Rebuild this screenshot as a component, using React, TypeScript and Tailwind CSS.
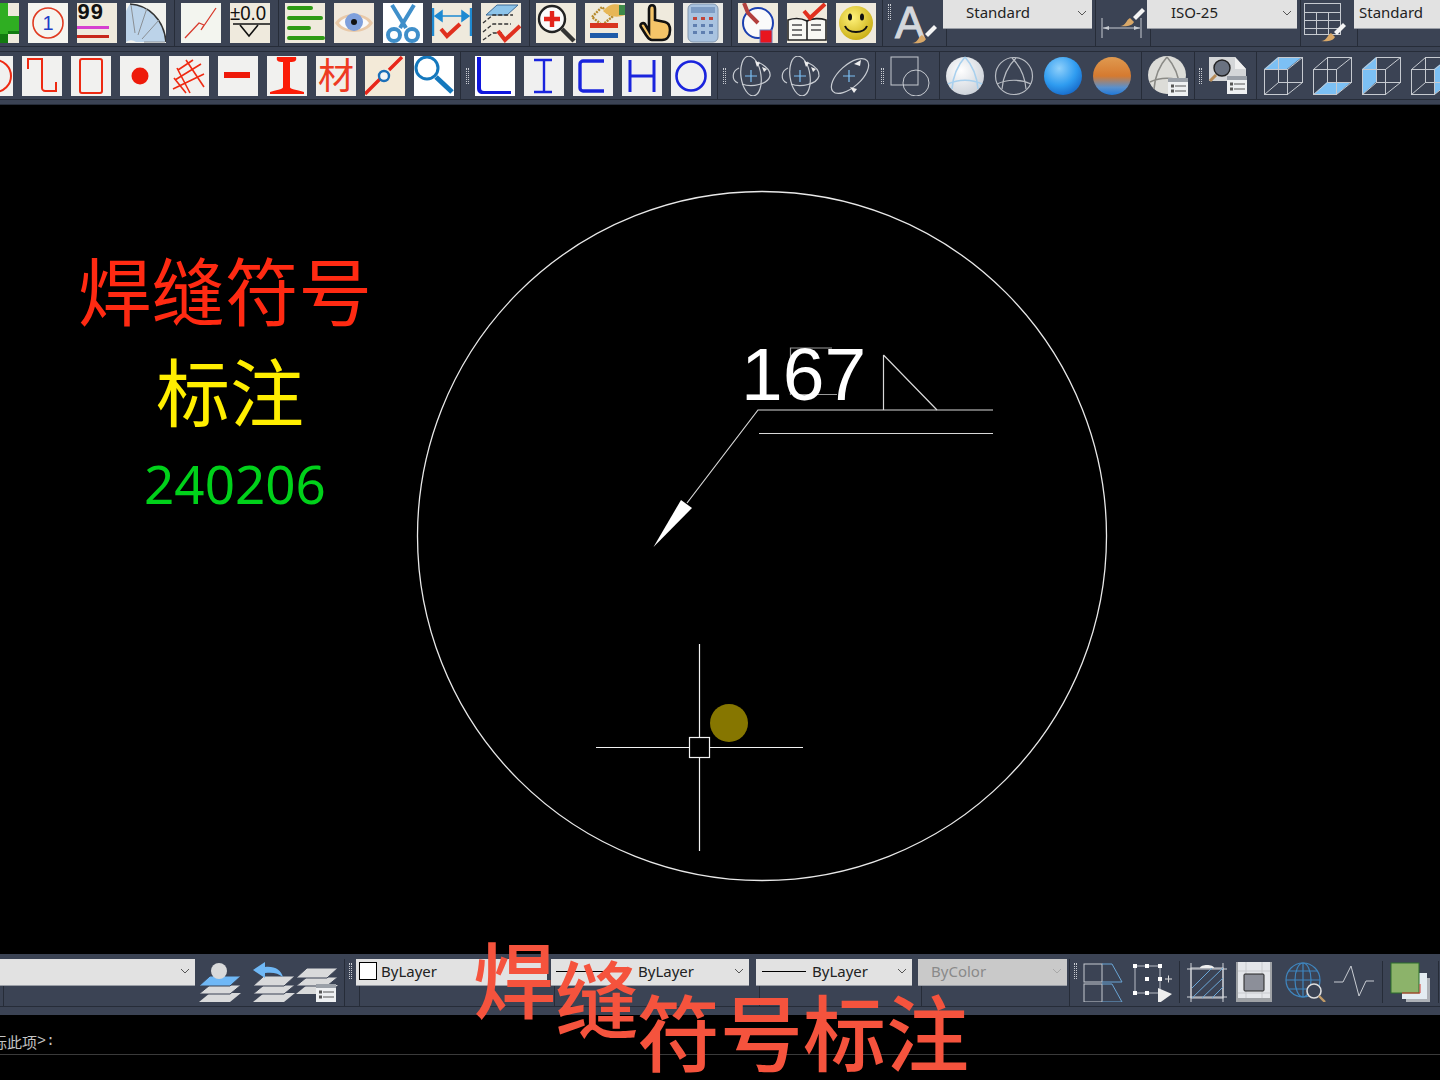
import type { ReactNode } from "react";

const cn = "font-['Noto_Sans_CJK_SC','Noto_Sans',sans-serif]";

function Tile({ bg = "bg-[#efeadd]", children, className = "" }: { bg?: string; children?: ReactNode; className?: string }) {
  return (
    <div className={`w-10 h-10 shrink-0 ${bg} ${className}`}>
      <svg width="40" height="40" viewBox="0 0 40 40">
        {children}
      </svg>
    </div>
  );
}

function Icon({ w = 40, children, className = "" }: { w?: number; children?: ReactNode; className?: string }) {
  return (
    <div className={`h-10 shrink-0 ${className}`}>
      <svg width={w} height="40" viewBox={`0 0 ${w} 40`}>
        {children}
      </svg>
    </div>
  );
}

function Sep({ className = "" }: { className?: string }) {
  return <div className={`w-px self-stretch bg-[#262c38] shrink-0 ${className}`} />;
}

function Grip({ className = "" }: { className?: string }) {
  return (
    <div className={`w-[3px] h-4 shrink-0 border-x border-dotted border-[#c9ccd2] ${className}`} />
  );
}

function Chevron({ light = false }: { light?: boolean }) {
  return (
    <svg width="10" height="6" viewBox="0 0 10 6" className="shrink-0">
      <path d="M1 1l4 4 4-4" fill="none" stroke={light ? "#a8a8a8" : "#555"} strokeWidth="1" />
    </svg>
  );
}

function Combo({ width, children, disabled = false, height = "h-[27px] pb-[2px]" }: { width: string; children?: ReactNode; disabled?: boolean; height?: string }) {
  return (
    <div className={`flex flex-col shrink-0 self-stretch ${width}`}>
      <div
        className={`${height} flex items-center pr-[5px] border-b border-[#9a9ea6] text-[15px] font-['Noto_Sans',sans-serif] ${
          disabled ? "bg-[#c9c9c9] text-[#8a8a8a]" : "bg-[#e2e2e2] text-[#222]"
        }`}
      >
        {children}
      </div>
      <div className="flex-1 ml-[3px] border-l border-[#262c38]" />
    </div>
  );
}

function Layers({ top = "#d9dadb" }: { top?: string }) {
  return (
    <>
      <path d="M0 40l11-9h31l-11 9z" fill="#d9dadb" />
      <path d="M0 32l11-9h31l-11 9z" fill="#d9dadb" stroke="#3b4354" />
      <path d="M0 24l11-10h31l-11 10z" fill={top} stroke="#3b4354" />
    </>
  );
}

function MiniList({ x, y }: { x: number; y: number }) {
  return (
    <g transform={`translate(${x} ${y})`}>
      <rect width="20" height="18" fill="#eef0f2" />
      <rect width="20" height="4" fill="#9aa0a8" />
      <path d="M7 8h11M7 13h11" stroke="#555" />
      <rect x="3" y="6.500" width="3" height="3" fill="#555" />
      <rect x="3" y="11.500" width="3" height="3" fill="#555" />
    </g>
  );
}

function Brush({ x, y }: { x: number; y: number }) {
  return (
    <g transform={`translate(${x} ${y})`}>
      <path d="M13 9L22 0l3 3-9 9z" fill="#f4f4f4" />
      <path d="M0 18c6 0 6-6 10-8l4 4c-2 4-8 5-14 4z" fill="#d9a868" />
    </g>
  );
}

function Cube({ face }: { face: "top" | "bottom" | "left" | "right" }) {
  const faces = {
    top: "M1 13L15 1h24L24 13z",
    bottom: "M1 39l14-13h24L24 39z",
    left: "M1 13L15 1v25L1 39z",
    right: "M24 13L39 1v25L24 39z",
  };
  return (
    <Icon>
      <path d={faces[face]} fill="#7cc0f4" />
      <g fill="none" stroke="#c6cad0">
        <rect x="1.500" y="13.500" width="23" height="25" />
        <rect x="15.500" y="1.500" width="24" height="25" />
        <path d="M1.500 13.500l14-12M24.500 13.500l15-12M1.500 38.500l14-12M24.500 38.500l15-12" />
      </g>
    </Icon>
  );
}

function Orbit({ third = false }: { third?: boolean }) {
  return (
    <Icon>
      <g fill="none" stroke="#c8ccd2" strokeWidth="1.2">
        {third ? (
          <ellipse cx="20" cy="20" rx="23" ry="11" transform="rotate(-42 20 20)" />
        ) : (
          <>
            <path d="M7 12C0 15-1 24 6 27" />
            <path d="M10 28C20 32 36 28 38 20 39 14 32 9 26 6" />
            <ellipse cx="19" cy="20" rx="10" ry="20" transform="rotate(-8 19 20)" />
          </>
        )}
      </g>
      <path d="M19 14v12M13 20h12" stroke="#7cc0f4" strokeWidth="1.2" />
      {third ? (
        <path d="M24 8l7-4-1 6zM20 31l7 2-3 4z" fill="#eee" />
      ) : (
        <path d="M23 5l5 2-3 4zM30 11l5 2-3 3z" fill="#eee" />
      )}
    </Icon>
  );
}

function TopRow() {
  return (
    <div className="h-[47px] flex items-start overflow-hidden border-b border-[#262c38] ml-[-21px]">
      <div className="flex gap-[9px] mt-[3px]">
        <Tile>
          <path d="M21 0h8v13h11v18H29v9h-8z" fill="#2fae22" />
          <path d="M21 31h8v9h-8zM29 28h11v3H29z" fill="#127a10" />
        </Tile>
        <Tile bg="bg-[#f5f5f0]">
          <circle cx="20" cy="20" r="15" fill="none" stroke="#e03a20" strokeWidth="1.6" />
          <text x="20" y="27" textAnchor="middle" fontSize="20" fontFamily="Liberation Sans" fill="#1d3fc8">1</text>
        </Tile>
        <Tile>
          <text x="0" y="16" fontSize="22" fontFamily="Liberation Mono" fontWeight="700" fill="#111">99</text>
          <rect x="0" y="23" width="32" height="3" fill="#d63fd0" />
          <rect x="0" y="32" width="32" height="3" fill="#c8271b" />
        </Tile>
        <Tile bg="bg-[#f2f2ee]">
          <path d="M0 39A39 39 0 0 1 4 1c18 1 34 15 36 38H10a9 9 0 0 0-10 0z" fill="#bcd3e9" />
          <path d="M4 1c18 1 34 15 36 38" fill="none" stroke="#333" strokeWidth="1.6" />
          <path d="M9 30L5 2M12 32L21 5M16 36L33 17M18 39h21" stroke="#8a8f94" strokeWidth="1" />
        </Tile>
      </div>
      <Sep className="ml-2 mr-[6px] h-[46px]" />
      <div className="flex gap-[9px] mt-[3px]">
        <Tile bg="bg-[#f3f5ef]">
          <path d="M4 35l14-15 5 2-3 5 15-22" fill="none" stroke="#d83a2c" strokeWidth="1.3" />
        </Tile>
        <Tile>
          <text x="0" y="17" fontSize="20" fontFamily="Liberation Sans" fill="#111" textLength="36" lengthAdjust="spacingAndGlyphs">±0.0</text>
          <path d="M3 21h37" stroke="#111" strokeWidth="1.6" />
          <path d="M10 22l9 11 9-11" fill="none" stroke="#111" strokeWidth="1.6" />
        </Tile>
      </div>
      <Sep className="ml-2 mr-[6px] h-[46px]" />
      <div className="flex gap-[9px] mt-[3px]">
        <Tile>
          <g stroke="#2e9b14" strokeWidth="4" strokeLinecap="round">
            <path d="M4 5h22M4 15h32M4 25h20M4 35h34" />
          </g>
        </Tile>
        <Tile bg="bg-[#f0e8dc]">
          <path d="M1 20C8 8 32 8 39 20 32 32 8 32 1 20z" fill="#e9c9a8" />
          <path d="M5 20C11 11 29 11 35 20 29 29 11 29 5 20z" fill="#fafafa" />
          <circle cx="20" cy="19" r="9" fill="#7fa0dc" />
          <circle cx="20" cy="19" r="3" fill="#111" />
        </Tile>
        <Tile bg="bg-white">
          <g fill="none" stroke="#3f8fca" strokeWidth="4">
            <path d="M9 2l14 23M31 2L17 25" />
            <circle cx="11" cy="32" r="6" />
            <circle cx="29" cy="32" r="6" />
          </g>
        </Tile>
        <Tile>
          <path d="M1 5v28M39 5v28" stroke="#1e8ad2" strokeWidth="2.4" />
          <path d="M3 13h34M3 13l7-5v10zM37 13l-7-5v10z" stroke="#1e8ad2" strokeWidth="1.5" fill="#1e8ad2" />
          <path d="M9 26l6 7L28 21" fill="none" stroke="#e0301e" strokeWidth="4" />
        </Tile>
        <Tile>
          <path d="M5 12L16 2h21L26 12z" fill="#8cc4ea" stroke="#3d6b96" />
          <g fill="none" stroke="#333" strokeWidth="1.3" strokeDasharray="4 2">
            <path d="M2 20L12 12h20M2 29l10-8h18M2 37l10-7h9" />
          </g>
          <path d="M17 28l7 9 15-14" fill="none" stroke="#e0301e" strokeWidth="4" />
        </Tile>
      </div>
      <Sep className="ml-2 mr-[6px] h-[46px]" />
      <div className="flex gap-[9px] mt-[3px]">
        <Tile>
          <circle cx="16" cy="16" r="13" fill="#fafafa" stroke="#222" strokeWidth="2.400" />
          <path d="M16 8v16M8 16h16" stroke="#e3241b" strokeWidth="4.400" />
          <path d="M26 26l12 12" stroke="#333" strokeWidth="4.400" />
        </Tile>
        <Tile>
          <path d="M7 14l10-10 10 10-10 8z" fill="none" stroke="#b68a2c" strokeWidth="2.400" strokeDasharray="2 1" />
          <path d="M18 8c6-8 14-8 22-5v9c-8 3-16 2-22-4z" fill="#e7b656" />
          <path d="M34 2h6v10h-6z" fill="#3f8a4a" />
          <rect x="5" y="20" width="28" height="5" fill="#d8351f" />
          <rect x="5" y="30" width="28" height="5" fill="#1f5ba8" />
        </Tile>
        <Tile>
          <path d="M15 28V6c0-5 6-5 6 0v11l10 2c4 1 5 4 5 8 0 6-3 10-8 10H18c-3 0-4-2-6-5l-5-8c-2-3 2-5 4-3z" fill="#f4c468" stroke="#111" strokeWidth="2.600" />
        </Tile>
        <Tile bg="bg-[#e9e9e6]">
          <rect x="5" y="1" width="30" height="38" rx="5" fill="#a9c3e0" stroke="#8095ad" />
          <rect x="8" y="4" width="24" height="6" fill="#7d9cc4" />
          <g fill="#c0453a">
            <rect x="10" y="14" width="4" height="3" />
            <rect x="18" y="14" width="4" height="3" />
            <rect x="26" y="14" width="4" height="3" />
          </g>
          <g fill="#5f7fb0">
            <rect x="10" y="21" width="4" height="3" />
            <rect x="18" y="21" width="4" height="3" />
            <rect x="26" y="21" width="4" height="3" />
            <rect x="10" y="28" width="4" height="3" />
            <rect x="18" y="28" width="4" height="3" />
            <rect x="26" y="28" width="4" height="3" />
          </g>
        </Tile>
      </div>
      <Sep className="ml-2 mr-[6px] h-[46px]" />
      <div className="flex gap-[9px] mt-[3px]">
        <Tile>
          <circle cx="20" cy="20" r="15" fill="#fafafa" stroke="#1b3fb0" strokeWidth="2" />
          <path d="M6 0l4 10 10 10" fill="none" stroke="#b3403e" strokeWidth="4" />
          <rect x="22" y="27" width="12" height="13" fill="#e8151f" stroke="#6a7cb8" />
        </Tile>
        <Tile>
          <path d="M1 17c6-2 13-2 19 1 5-3 13-3 19-1v20H1z" fill="#f8f8f4" stroke="#222" strokeWidth="1.600" />
          <path d="M20 18v19" stroke="#222" strokeWidth="1.600" />
          <path d="M5 22h10M5 27h10M24 22h10M24 27h10M5 32h10" stroke="#777" strokeWidth="2" />
          <path d="M17 8l6 7L38 1" fill="none" stroke="#e0301e" strokeWidth="4" />
        </Tile>
        <Tile>
          <defs>
            <radialGradient id="smile" cx="0.4" cy="0.35" r="0.7">
              <stop offset="0" stopColor="#fff27a" />
              <stop offset="1" stopColor="#c8ac10" />
            </radialGradient>
          </defs>
          <circle cx="20" cy="20" r="17" fill="url(#smile)" />
          <ellipse cx="14" cy="14" rx="2" ry="3.500" fill="#111" />
          <ellipse cx="26" cy="14" rx="2" ry="3.500" fill="#111" />
          <path d="M9 23c3 8 19 8 22 0" fill="none" stroke="#111" strokeWidth="2" />
        </Tile>
      </div>
      <Sep className="ml-[6px] mr-[5px] h-[46px]" />
      <Grip className="mt-1" />
      <div className="w-[46px] h-[46px] shrink-0 ml-[3px]">
        <svg width="46" height="46" viewBox="0 0 46 46">
          <text x="1" y="38" fontSize="44" fontFamily="Liberation Sans" fill="#d4d7dc" stroke="#d4d7dc" strokeWidth="1">A</text>
          <Brush x="18" y="25" />
        </svg>
      </div>
      <div className="flex h-[46px] items-stretch shrink-0 ml-[3px]">
        <Combo width="w-[149px]" height="h-[29px] pb-[3px]">
          <span className="ml-[23px] flex-1">Standard</span>
          <Chevron />
        </Combo>
        <Sep className="ml-[3px]" />
        <div className="w-[51px] shrink-0">
          <svg width="51" height="46" viewBox="0 0 51 46">
            <path d="M6 18v20M45 18v20M7 28h37" stroke="#c8ccd2" fill="none" />
            <path d="M7 28l6-2v4zM44 28l-6-2v4z" fill="#c8ccd2" />
            <Brush x="24" y="8" />
          </svg>
        </div>
        <Combo width="w-[150px]" height="h-[29px] pb-[3px]">
          <span className="ml-[24px] flex-1">ISO-25</span>
          <Chevron />
        </Combo>
        <Sep className="ml-[3px] mr-[2px]" />
        <div className="w-[51px] shrink-0">
          <svg width="51" height="46" viewBox="0 0 51 46">
            <g fill="none" stroke="#c6cad0">
              <rect x="1.500" y="3.500" width="36" height="31" />
              <path d="M1.500 12.500h36M1.500 20.500h36M1.500 28.500h36M13.500 12.500v22M25.500 12.500v22" />
            </g>
            <Brush x="18" y="23" />
          </svg>
        </div>
        <Combo width="w-[120px]" height="h-[29px] pb-[3px]">
          <span className="ml-[5px] flex-1">Standard</span>
        </Combo>
      </div>
    </div>
  );
}

function Red({ children, bg = "bg-[#f1f1ef]" }: { children: ReactNode; bg?: string }) {
  return <Tile bg={bg}>{children}</Tile>;
}

function SecondRow() {
  return (
    <div className="mt-1 h-[49px] flex items-center overflow-hidden border-y border-[#262c38] ml-[-27px]">
      <div className="flex gap-[9px]">
        <Red>
          <circle cx="22" cy="20" r="16" fill="none" stroke="#ee2a12" strokeWidth="2" />
        </Red>
        <Red>
          <path d="M6 13V3h14v29c0 4 3 3 14 3V26" fill="none" stroke="#ee2a12" strokeWidth="2" />
        </Red>
        <Red>
          <rect x="9" y="3" width="22" height="34" rx="2" fill="none" stroke="#ee2a12" strokeWidth="2" />
        </Red>
        <Red>
          <circle cx="20" cy="20" r="8.500" fill="#ee1a0a" />
        </Red>
        <Red>
          <g stroke="#ee2a12" strokeWidth="1.600">
            <path d="M4 33L35 18M6 24L32 8M9 14L24 4M8 12L21 37M17 4L35 31M5 22l12 15" />
          </g>
        </Red>
        <Red>
          <rect x="6" y="16" width="26" height="6" fill="#ee1a0a" />
        </Red>
        <Red>
          <path d="M10 1h19c1 4-1 5-6 5v25c0 2 4 2 14 5v2H3v-2c10-3 13-3 13-5V6c-5 0-7-1-6-5z" fill="#fb1c07" />
        </Red>
        <Tile bg="bg-[#f1eee9]">
          <text x="20" y="33" textAnchor="middle" fontSize="36" fontFamily="Noto Sans CJK SC" fill="#ee3a22">材</text>
        </Tile>
        <Tile bg="bg-[#f3ead8]">
          <path d="M0 38L16 22M24 14L37 1" stroke="#e8261a" strokeWidth="3.400" />
          <circle cx="19" cy="20" r="5" fill="#f5f5f5" stroke="#1c6fb8" strokeWidth="2.400" />
        </Tile>
        <Tile bg="bg-white">
          <circle cx="13" cy="12" r="11" fill="none" stroke="#1478bd" strokeWidth="3" />
          <path d="M22 21l16 15" stroke="#1478bd" strokeWidth="5" />
        </Tile>
      </div>
      <Sep className="ml-[6px] mr-[5px]" />
      <Grip />
      <div className="flex gap-[9px] ml-[6px]">
        <Tile bg="bg-white">
          <path d="M2 1h4v31c0 2 1 3 3 3h27v3H8c-4 0-6-2-6-6z" fill="#1017dd" />
        </Tile>
        <Tile bg="bg-[#f0f0f0]">
          <path d="M10 4h18M20 4v32M10 36h18" stroke="#1a24dd" strokeWidth="2.400" fill="none" />
        </Tile>
        <Tile bg="bg-[#f0f0f0]">
          <path d="M31 5H10c-1 0-3 1-3 3v24c0 2 2 3 3 3h21" stroke="#1a24dd" strokeWidth="3.400" fill="none" />
        </Tile>
        <Tile bg="bg-[#f0f0f0]">
          <path d="M8 4v32M32 4v32M8 20h24" stroke="#1a24dd" strokeWidth="3" fill="none" />
        </Tile>
        <Tile bg="bg-[#f0f0f0]">
          <circle cx="20" cy="20" r="14.500" fill="none" stroke="#1a24dd" strokeWidth="2.600" />
        </Tile>
      </div>
      <Sep className="ml-[6px] mr-[5px]" />
      <Grip />
      <div className="flex gap-[9px] ml-[6px]">
        <Orbit />
        <Orbit />
        <Orbit third />
      </div>
      <Sep className="ml-[5px] mr-[5px]" />
      <Grip />
      <Icon className="ml-[6px]">
        <rect x="1" y="1" width="27" height="28" fill="none" stroke="#c6cad0" />
        <circle cx="26" cy="27" r="13" fill="none" stroke="#c6cad0" />
      </Icon>
      <Sep className="ml-[9px] mr-[5px]" />
      <div className="flex gap-[9px]">
        <Icon>
          <defs>
            <radialGradient id="pale" cx="0.4" cy="0.35" r="0.75">
              <stop offset="0" stopColor="#ffffff" />
              <stop offset="1" stopColor="#c8ced6" />
            </radialGradient>
          </defs>
          <circle cx="20" cy="20" r="19" fill="url(#pale)" />
          <path d="M3 28c10-5 24-5 34 0M20 1C12 10 8 20 7 33M20 1c8 9 12 19 13 32" fill="none" stroke="#a8d0ee" strokeWidth="1.600" />
        </Icon>
        <Icon>
          <g fill="none" stroke="#b8bcc3" strokeWidth="1.200">
            <circle cx="20" cy="20" r="18.500" />
            <path d="M3 28c10-5 24-5 34 0M22 2C14 10 9 20 8 33M18 2c8 8 13 18 14 31" />
          </g>
        </Icon>
        <Icon>
          <defs>
            <radialGradient id="blue" cx="0.4" cy="0.3" r="0.75">
              <stop offset="0" stopColor="#8fd0fb" />
              <stop offset="0.6" stopColor="#2f9cf0" />
              <stop offset="1" stopColor="#1668c8" />
            </radialGradient>
          </defs>
          <circle cx="20" cy="20" r="19" fill="url(#blue)" />
        </Icon>
        <Icon>
          <defs>
            <linearGradient id="orange" x1="0" y1="0" x2="0" y2="1">
              <stop offset="0" stopColor="#e09a50" />
              <stop offset="0.5" stopColor="#d57a30" />
              <stop offset="0.8" stopColor="#5a90cc" />
              <stop offset="1" stopColor="#1f78d8" />
            </linearGradient>
          </defs>
          <circle cx="20" cy="20" r="19" fill="url(#orange)" />
        </Icon>
      </div>
      <Sep className="ml-[9px] mr-[6px]" />
      <Icon>
        <circle cx="19" cy="19" r="19" fill="#dcdcd8" />
        <path d="M2 26c10-5 24-5 34 0M19 1C11 10 7 20 6 33M19 1c8 9 12 19 13 32" fill="none" stroke="#8a8a86" strokeWidth="1.600" />
        <MiniList x="20" y="22" />
      </Icon>
      <Sep className="ml-[6px] mr-[4px]" />
      <Grip />
      <Icon className="ml-[6px]">
        <path d="M1 1h26l11 12v12H1z" fill="#d4d6d8" />
        <path d="M27 1v12h11z" fill="#f0f0f0" />
        <circle cx="14" cy="12" r="8" fill="#6a7280" stroke="#222" strokeWidth="1.400" />
        <path d="M8 19l-6 6" stroke="#b58a56" strokeWidth="3" />
        <MiniList x="19" y="20" />
      </Icon>
      <Sep className="ml-2 mr-[6px]" />
      <div className="flex gap-[9px]">
        <Cube face="top" />
        <Cube face="bottom" />
        <Cube face="left" />
        <Cube face="right" />
      </div>
    </div>
  );
}

function Canvas() {
  return (
    <div className="relative h-[849px] bg-black overflow-hidden">
      <svg width="1440" height="849" viewBox="0 105 1440 849" className="absolute left-0 top-0">
        <circle cx="762" cy="536" r="344.500" fill="none" stroke="#e8e8e8" strokeWidth="1.300" />
        <g stroke="#d8d8d8" fill="none" strokeWidth="1.200">
          <path d="M790.500 395V348H832M797 394.500h40" stroke="#999" />
          <path d="M687 503L758 410H993M759 433.500H993" />
          <path d="M883.500 355V410M883.500 355L937 410" />
        </g>
        <path d="M653.500 547L681 500l11 8z" fill="#fff" />
        <circle cx="729" cy="723" r="19" fill="#867600" />
        <path d="M699.500 644V737M699.500 757V851M596 747.500H689M710 747.500H803" stroke="#f2f2f2" strokeWidth="1.200" />
        <rect x="689.500" y="737.500" width="20" height="20" fill="#000" stroke="#f2f2f2" strokeWidth="1.200" />
      </svg>
      <span className={`absolute left-[78px] top-[147px] text-[73.5px] leading-none text-[#ff2a12] whitespace-nowrap ${cn}`}>焊缝符号</span>
      <span className={`absolute left-[156px] top-[247px] text-[74px] leading-none text-[#ffee00] whitespace-nowrap ${cn}`}>标注</span>
      <span className="absolute left-[144px] top-[352px] text-[53px] leading-none text-[#00d11a] font-['Noto_Sans',sans-serif]">240206</span>
      <span className="absolute left-[741px] top-[232px] text-[75px] leading-none text-white font-['Liberation_Sans',sans-serif]">167</span>
    </div>
  );
}

function BottomBar() {
  return (
    <div className="bg-[#3b4354] h-[61px] pb-2">
      <div className="h-[53px] pt-[5px] flex border-b border-[#262c38] overflow-hidden">
        <Combo width="w-[195px]">
          <span className="flex-1" />
          <Chevron />
        </Combo>
        <div className="flex mt-[3px] ml-1">
          <Icon w={44}>
            <Layers top="#6fb8f6" />
            <circle cx="20" cy="9" r="8" fill="#d9dadb" />
          </Icon>
          <Icon w={44} className="ml-[10px]">
            <Layers />
            <path d="M0 8l12-8v5c10-1 16 3 18 10-5-4-10-5-18-4v5z" fill="#6fb8f6" />
          </Icon>
          <Icon w={44} className="ml-[-1px]">
            <g transform="translate(0 -8)">
              <Layers />
            </g>
            <MiniList x="20" y="22" />
          </Icon>
        </div>
        <Sep className="ml-[4px]" />
        <Grip className="ml-[4px] mt-[4px]" />
        <div className="ml-[4px] flex">
          <Combo width="w-[191px]">
            <span className="w-[18px] h-[18px] ml-[3px] mr-[4px] bg-white border border-black shrink-0" />
            <span>ByLayer</span>
          </Combo>
          <div className="w-[4px] shrink-0" />
          <Combo width="w-[198px]">
            <span className="w-[70px] ml-[5px] mr-[12px] h-px bg-black shrink-0" />
            <span className="flex-1">ByLayer</span>
            <Chevron />
          </Combo>
          <div className="w-[7px] shrink-0" />
          <Combo width="w-[156px]">
            <span className="w-[44px] ml-[6px] mr-[6px] h-px bg-black shrink-0" />
            <span className="flex-1">ByLayer</span>
            <Chevron />
          </Combo>
          <div className="w-[6px] shrink-0" />
          <Combo width="w-[149px]" disabled>
            <span className="ml-[13px] flex-1">ByColor</span>
            <Chevron light />
          </Combo>
        </div>
        <Sep className="ml-[2px]" />
        <Grip className="ml-[4px] mt-[4px]" />
        <div className="flex mt-[3px] ml-[5px]">
          <Icon w={40} className="ml-[1px]">
            <rect x="1" y="2" width="18" height="18" fill="none" stroke="#c6cad0" />
            <rect x="1" y="22" width="18" height="18" fill="none" stroke="#c6cad0" />
            <path d="M19 2h10l10 18H19M19 22h10l10 18H19" fill="none" stroke="#6aa6d6" />
          </Icon>
          <Icon w={44} className="ml-[9px]">
            <path d="M3 4h25v27H3z" fill="none" stroke="#b8bcc4" />
            <g fill="#fff">
              <rect x="1" y="2" width="4" height="4" />
              <rect x="13" y="2" width="4" height="4" />
              <rect x="26" y="2" width="4" height="4" />
              <rect x="1" y="29" width="4" height="4" />
              <rect x="13" y="29" width="4" height="4" />
              <rect x="13" y="15" width="4" height="4" />
              <rect x="26" y="15" width="4" height="4" />
            </g>
            <path d="M33 17h7M36.500 13.500v7" stroke="#e0e0e0" />
            <path d="M26 26v16l14-10z" fill="#eee" />
          </Icon>
          <Sep className="mb-[3px] mt-[-1px] ml-[3px] mr-[6px]" />
          <Icon w={42}>
            <rect x="5" y="6" width="32" height="30" fill="none" stroke="#d4d6da" />
            <path d="M1 7h40M1 35h40M5 1v39M37 1v39" stroke="#d4d6da" />
            <path d="M6 26L26 6M6 36L37 6M16 36L37 16M26 36l11-11" stroke="#6aa6d6" />
            <path d="M14 6c0-4 14-4 14 0z" fill="#eee" />
          </Icon>
          <Icon w={36} className="ml-[8px]">
            <rect x="0" y="0" width="36" height="40" fill="#9fa2a6" />
            <rect x="2" y="0" width="32" height="36" fill="#e4e6ea" />
            <path d="M2 9h32M2 31h32M10 0v36M26 0v36" stroke="#c8cace" />
            <rect x="8" y="12" width="20" height="17" rx="1" fill="#8c8f99" stroke="#222" />
          </Icon>
          <Icon w={42} className="ml-[13px]">
            <g fill="none" stroke="#3f86bf" strokeWidth="1.200">
              <circle cx="18" cy="18" r="17" />
              <ellipse cx="18" cy="18" rx="8" ry="17" />
              <path d="M18 1v34M1 18h34M4 9h28M4 27h28" />
            </g>
            <circle cx="29" cy="29" r="7" fill="#3b4354" stroke="#e0e0e0" strokeWidth="1.600" />
            <path d="M34 34l6 6" stroke="#c09a66" strokeWidth="2.400" />
          </Icon>
          <Icon w={40} className="ml-[7px]">
            <path d="M0 20h9L17 4l8 30 7-15h8" fill="none" stroke="#c8ccd2" strokeWidth="1" />
          </Icon>
          <Sep className="mb-[3px] mt-[-1px] ml-2 mr-[7px]" />
          <Icon>
            <rect x="16" y="16" width="24" height="24" fill="#aeb2b8" />
            <rect x="12" y="11" width="25" height="26" fill="#e4ecf2" />
            <rect x="1" y="1" width="28" height="30" fill="#8cb36a" stroke="#2c6e2c" />
            <path d="M12 31h18V22" fill="none" stroke="#d23a2e" />
          </Icon>
          <Sep className="mb-[3px] mt-[-1px] ml-[8px]" />
        </div>
      </div>
    </div>
  );
}

export default function App() {
  return (
    <div className="relative w-[1440px] h-[1080px] overflow-hidden bg-black">
      <div className="bg-[#3b4354] h-[105px] border-b border-[#262c38] overflow-hidden">
        <TopRow />
        <SecondRow />
      </div>
      <Canvas />
      <BottomBar />
      <div className="h-[65px] bg-black">
        <div className={`h-[40px] flex items-end pb-[2px] border-b border-[#3a3a3a] whitespace-nowrap text-[15px] leading-5 text-[#c4c4c4] ml-[-8px] ${cn}`}>
          <span>标此项</span>
          <span className="font-['Liberation_Mono',monospace]">&gt;:</span>
        </div>
      </div>
      <span className={`absolute left-[473px] top-[935px] text-[83px] font-medium leading-none text-[#f5533d] ${cn}`}>焊</span>
      <span className={`absolute left-[555px] top-[954px] text-[84px] font-medium leading-none text-[#f5533d] ${cn}`}>缝</span>
      <span className={`absolute left-[637px] top-[988px] text-[83px] font-medium leading-none text-[#f5533d] whitespace-nowrap ${cn}`}>符号标注</span>
    </div>
  );
}
